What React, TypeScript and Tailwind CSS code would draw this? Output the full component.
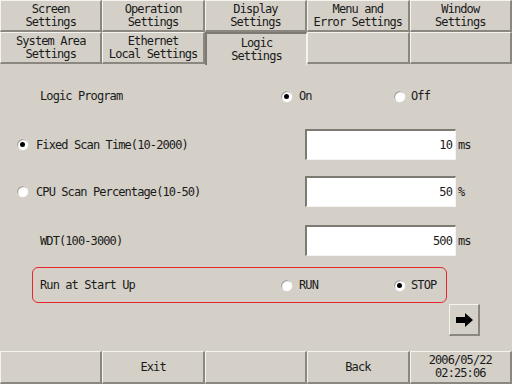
import React from "react";

const font = "font-['DejaVu_Sans_Mono','Liberation_Mono',monospace] text-[12px] tracking-[-0.9px] text-[#1a1a1a]";

const Radio = ({ checked }: { checked?: boolean }) => (
	<div className="w-[11px] h-[11px] rounded-full bg-white shadow-[inset_1px_1px_1px_#9a978f,0_0_1px_#fff] flex items-center justify-center shrink-0">
		{checked && <div className="w-[5px] h-[5px] rounded-full bg-black" />}
	</div>
);

const TabButton = ({
	lines,
	selected,
}: {
	lines: string[];
	selected?: boolean;
}) => (
	<div
		className={`flex flex-col items-center justify-center leading-[13px] ${
			selected
				? "border-t-2 border-l-2 border-r border-t-[#7d7a74] border-l-[#7d7a74] border-r-[#f4f3f0] bg-[#d4d0c8] -mb-[1px]"
				: "border-t border-l border-b-2 border-r-2 border-t-[#f4f3f0] border-l-[#f4f3f0] border-b-[#8a8780] border-r-[#8a8780] bg-[#d4d0c8]"
		}`}>
		{lines.map((l) => (
			<span key={l} className="whitespace-pre">
				{l}
			</span>
		))}
	</div>
);

const InputBox = ({ value, unit }: { value: string; unit: string }) => (
	<div className="flex items-center">
		<div className="w-[151px] h-[31px] bg-white border-t-2 border-l-2 border-t-[#7d7a74] border-l-[#7d7a74] border-b border-r border-b-[#f4f3f0] border-r-[#f4f3f0] flex items-center justify-end pr-[3px]">
			{value}
		</div>
		<span className="ml-[2px]">{unit}</span>
	</div>
);

const BottomButton = ({ lines }: { lines: string[] }) => (
	<div className="flex flex-col items-center justify-center leading-[13px] border-t border-l border-b-2 border-r-2 border-t-[#f4f3f0] border-l-[#f4f3f0] border-b-[#8a8780] border-r-[#8a8780]">
		{lines.map((l) => (
			<span key={l}>{l}</span>
		))}
	</div>
);

export default function App() {
	return (
		<div className={`w-[512px] h-[384px] bg-[#d4d0c8] flex flex-col overflow-hidden ${font}`}>
			{/* tabs */}
			<div className="grid grid-cols-5 h-[32px]">
				<TabButton lines={["Screen", "Settings"]} />
				<TabButton lines={["Operation", "Settings"]} />
				<TabButton lines={["Display", "Settings"]} />
				<TabButton lines={["Menu and", "Error Settings"]} />
				<TabButton lines={["Window", "Settings"]} />
			</div>
			<div className="grid grid-cols-5 h-[32px]">
				<TabButton lines={["System Area", "Settings"]} />
				<TabButton lines={["Ethernet", "Local Settings"]} />
				<TabButton lines={["Logic", "Settings"]} selected />
				<TabButton lines={[" "]} />
				<TabButton lines={[" "]} />
			</div>

			{/* content */}
			<div className="flex-1 flex flex-col">
				<div className="mt-[18px] h-[28px] flex items-center">
					<span className="w-[281px] pl-[40px]">Logic Program</span>
					<div className="flex items-center gap-[7px] w-[113px]">
						<Radio checked />
						<span>On</span>
					</div>
					<div className="flex items-center gap-[6px]">
						<Radio />
						<span>Off</span>
					</div>
				</div>

				<div className="mt-[19px] h-[31px] flex items-center">
					<div className="w-[305px] pl-[17px] flex items-center gap-[8px]">
						<Radio checked />
						<span>Fixed Scan Time(10-2000)</span>
					</div>
					<InputBox value="10" unit="ms" />
				</div>

				<div className="mt-[16px] h-[31px] flex items-center">
					<div className="w-[305px] pl-[17px] flex items-center gap-[8px]">
						<Radio />
						<span>CPU Scan Percentage(10-50)</span>
					</div>
					<InputBox value="50" unit="%" />
				</div>

				<div className="mt-[18px] h-[31px] flex items-center">
					<span className="w-[305px] pl-[40px]">WDT(100-3000)</span>
					<InputBox value="500" unit="ms" />
				</div>

				<div className="mt-[11px] ml-[32px] w-[415px] h-[36px] border-[1.5px] border-[#e8242a] rounded-[6px] flex items-center">
					<span className="w-[248px] pl-[7px]">Run at Start Up</span>
					<div className="flex items-center gap-[7px] w-[113px]">
						<Radio />
						<span>RUN</span>
					</div>
					<div className="flex items-center gap-[6px]">
						<Radio checked />
						<span>STOP</span>
					</div>
				</div>

				<div className="mt-[1px] flex">
					<div className="ml-[449px] w-[31px] h-[32px] border-t border-l border-b-2 border-r-2 border-t-[#f4f3f0] border-l-[#f4f3f0] border-b-[#8a8780] border-r-[#8a8780] flex items-center justify-center">
						<svg width="17" height="14" viewBox="0 0 17 14">
							<path d="M0 4 H9 V0 L17 7 L9 14 V10 H0 Z" fill="#000" />
						</svg>
					</div>
				</div>
			</div>

			{/* bottom bar */}
			<div className="grid grid-cols-5 h-[33px]">
				<BottomButton lines={[""]} />
				<BottomButton lines={["Exit"]} />
				<BottomButton lines={[""]} />
				<BottomButton lines={["Back"]} />
				<BottomButton lines={["2006/05/22", "02:25:06"]} />
			</div>
		</div>
	);
}
